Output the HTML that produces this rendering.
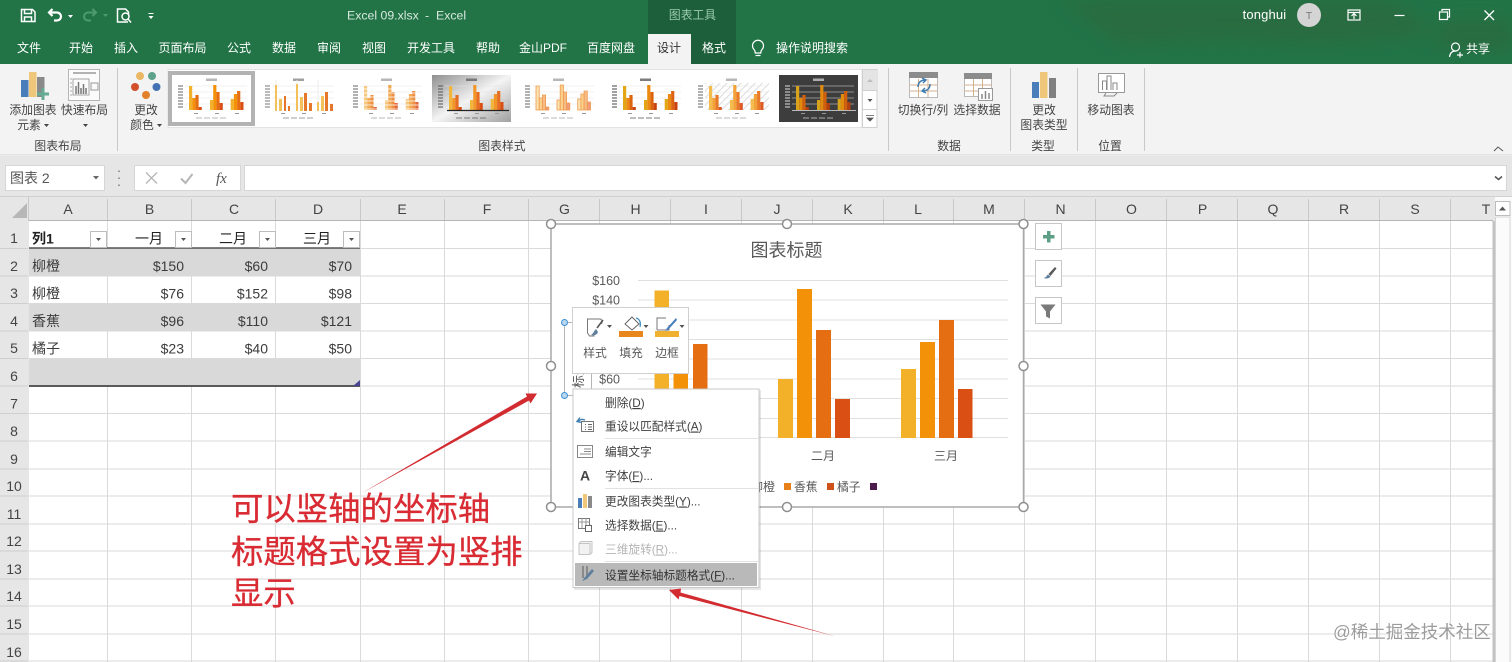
<!DOCTYPE html>
<html><head><meta charset="utf-8"><style>
html,body{margin:0;padding:0;background:#fff;width:1512px;height:662px;overflow:hidden}
svg{display:block;font-family:"Liberation Sans","Noto Sans CJK SC",sans-serif;font-size:12px;filter:blur(.35px)}
.m{text-anchor:middle}.e{text-anchor:end}
.t text{fill:#fff}
.h text{fill:#444;font-size:14px;text-anchor:middle}
.c text{fill:#3c3c3c;font-size:14px}
.y text{fill:#595959;font-size:12.5px;text-anchor:end}
.n text{fill:#404040;font-size:11.7px}
.f{fill:#fff;stroke:#bdbdbd}
</style></head><body>
<svg width="1512" height="662" viewBox="0 0 1512 662" xmlns="http://www.w3.org/2000/svg">
<defs>
<filter id="bl"><feGaussianBlur stdDeviation="9"/></filter>
<linearGradient id="gg" x1="0" y1="0" x2="1" y2="1"><stop offset="0" stop-color="#8f8f8f"/><stop offset=".5" stop-color="#f4f4f4"/><stop offset="1" stop-color="#a0a0a0"/></linearGradient>
<pattern id="ht" width="5" height="5" patternUnits="userSpaceOnUse" patternTransform="rotate(45)"><rect width="5" height="5" fill="#fff"/><rect width="1" height="5" fill="#dcdcdc"/></pattern>
<g id="bars">
<path d="M17 11h3.200v24H17zM38 25h3.200v10H38zM58.700 24h3.200v11h-3.200z" fill="var(--a)"/>
<path d="M20.200 23h3.200v12h-3.200zM41.200 10h3.200v25h-3.200zM61.900 19h3.200v16h-3.200z" fill="var(--b)"/>
<path d="M23.400 20h3.200v15h-3.200zM44.400 17h3.200v18h-3.200zM65.100 16h3.200v19h-3.200z" fill="var(--c)"/>
<path d="M26.600 32h3.200v3h-3.200zM47.600 28h3.200v7h-3.200zM68.300 27h3.200v8h-3.200z" fill="var(--d)"/>
</g>
<g id="ax">
<path d="M6 11h5M6 14h5M6 17h5M6 20h5M6 23h5M6 26h5M6 29h5M6 32h5" stroke="var(--l,#666)"/>
<path d="M13 11h62M13 17h62M13 23h62M13 29h62" stroke="#e2e2e2" stroke-width=".6"/>
<rect x="34" y="3.500" width="11" height="2.500" fill="var(--l,#999)" opacity=".7"/>
<path d="M22 38.500h4M43 38.500h4M63 38.500h4" stroke="#999"/>
<path d="M24 43h6M32 43h6M40 43h6M48 43h6" stroke="var(--l,#999)" opacity=".7"/>
</g>
</defs>

<!-- title bar -->
<rect width="1512" height="64" fill="#227447"/>
<g filter="url(#bl)" fill="#2a6a41" opacity=".85"><path d="M1060 0h330l50 34-120 10-90-5-110 5z"/><path d="M1440 20h72v30h-72z"/></g>
<rect x="648" width="88" height="64" fill="#1c5f3a"/>
<rect x="648" y="34" width="43" height="31" fill="#f3f3f3"/>
<!-- QAT -->
<g fill="none" stroke="#fff" stroke-width="1.500">
<path d="M21.500 9.500h11l2.500 2.500v9.500h-13.500z"/><path d="M24.500 9.500v4h7v-4M24.500 21.500v-4.500h7v4.500"/>
<path d="M49 12.500h8a4 4 0 0 1 0 8h-3M52.500 9l-3.500 3.500 3.500 3.500" stroke-width="2.200"/>
<g stroke="#4d9a6e"><path d="M96 12.500h-8a4 4 0 0 0 0 8h3M92.500 9l3.500 3.500-3.500 3.500" stroke-width="2"/></g>
<path d="M128 22h-10.500V9h8l3 3v3"/><circle cx="125.500" cy="16.500" r="3.500"/><path d="M128 19l3 3.500"/>
</g>
<path d="M68 15h5l-2.500 3zM148.500 16h5l-2.500 3zM148.500 13h5v1h-5z" fill="#fff"/>
<path d="M103 14h5l-2.500 3z" fill="#4d9a6e"/>
<g class="t">
<g font-size="12.300" style="fill:#d8e8de"><text x="347" y="19.500" style="fill:#d8e8de">Excel 09.xlsx</text><text x="425" y="19.500" style="fill:#d8e8de">-</text><text x="436" y="19.500" style="fill:#d8e8de">Excel</text></g>
<text x="692.500" y="19" class="m" style="fill:#9bcbaa" font-size="11.800">图表工具</text>
<g font-size="12">
<text x="29" y="52" class="m">文件</text><text x="81" y="52" class="m">开始</text><text x="126" y="52" class="m">插入</text><text x="182.500" y="52" class="m">页面布局</text><text x="239" y="52" class="m">公式</text><text x="284" y="52" class="m">数据</text><text x="329" y="52" class="m">审阅</text><text x="374" y="52" class="m">视图</text><text x="431" y="52" class="m">开发工具</text><text x="488" y="52" class="m">帮助</text><text x="543" y="52" class="m">金山PDF</text><text x="611" y="52" class="m">百度网盘</text>
<text x="669" y="52" class="m" style="fill:#333">设计</text><text x="714" y="52" class="m">格式</text><text x="812" y="52" class="m">操作说明搜索</text><text x="1478" y="53" class="m">共享</text>
</g>
<text x="1264.500" y="19" class="m" font-size="13" letter-spacing=".15">tonghui</text>
</g>
<g fill="none" stroke="#fff" stroke-width="1.200">
<path d="M754 49.500a5.500 5.500 0 1 1 8 0c-1 1-1.200 2-1.200 3.500h-5.600c0-1.500-.2-2.500-1.200-3.500zM755.500 55.500h5"/>
<rect x="1348" y="10" width="12" height="10"/><path d="M1348 12.500h12M1354 19v-5M1351.500 16l2.500-2.500 2.500 2.500"/>
<path d="M1394.500 15.500h10"/>
<rect x="1439.500" y="12" width="8" height="7.500"/><path d="M1442 11v-1.500h7.500v7.500h-2"/>
<path d="M1484.500 10.500l9.500 9.500M1494 10.500l-9.500 9.500" stroke-width="1.300"/>
<circle cx="1455.500" cy="47" r="4"/><path d="M1449.500 57c.5-4 2.500-6 6-6M1457 55h6M1460 52v5.500"/>
</g>
<circle cx="1309" cy="15" r="12" fill="#d4d4d4"/><text x="1309" y="19" class="m" font-size="10.500" fill="#777">T</text>

<!-- ribbon -->
<rect y="64" width="1512" height="91" fill="#f3f3f3"/>
<path d="M117.500 68v83M888.500 68v83M1010.500 68v83M1077.500 68v83M1144.500 68v83" stroke="#c9c9c9"/>
<path d="M0 155h1512" stroke="#d5d5d5"/>
<rect y="156" width="1512" height="41" fill="#e6e6e6"/>
<!-- ribbon left icons -->
<rect x="21" y="80" width="7.500" height="17" fill="#4a7ebb"/><rect x="29" y="72" width="7.500" height="25" fill="#efc77b"/><rect x="37" y="77" width="7.500" height="20" fill="#8a8a8a"/>
<path d="M41.500 88h3v4.500h4.500v3h-4.500v4.500h-3v-4.500h-4.500v-3h4.500z" fill="#66ab93"/>
<rect x="68.500" y="69.500" width="31" height="31" fill="#fbfbfb" stroke="#b5b5b5"/>
<path d="M73 73h23" stroke="#999" stroke-width="1.500"/><rect x="73" y="79" width="16" height="16" fill="none" stroke="#a5a5a5"/><path d="M76 94v-8M78.500 94v-12M81 94v-6M83.500 94v-10M86 94v-6" stroke="#777" stroke-width="1.500"/><rect x="91" y="83" width="7" height="7" fill="none" stroke="#999"/><path d="M71 78v18" stroke="#aaa" stroke-dasharray="2 2"/>
<circle cx="140" cy="76" r="4" fill="#eab865"/><circle cx="152" cy="76" r="4" fill="#5fa28b"/><circle cx="135" cy="87" r="4" fill="#d2502c"/><circle cx="156.500" cy="87" r="4" fill="#4272b4"/><circle cx="146" cy="95" r="4" fill="#e3812b"/>
<g fill="#444" font-size="11.800">
<text x="33" y="114" class="m">添加图表</text><text x="29" y="129" class="m">元素</text><path d="M44 124h5l-2.500 3zM83 124h5l-2.500 3zM157 124h5l-2.500 3z"/>
<text x="84.500" y="114" class="m">快速布局</text>
<text x="146" y="114" class="m">更改</text><text x="142" y="129" class="m">颜色</text>
<text x="58" y="150" class="m">图表布局</text><text x="502" y="150" class="m">图表样式</text>
<text x="923" y="114" class="m">切换行/列</text><text x="977" y="114" class="m">选择数据</text><text x="949" y="150" class="m">数据</text>
<text x="1044" y="114" class="m">更改</text><text x="1044" y="129" class="m">图表类型</text><text x="1043" y="150" class="m">类型</text>
<text x="1111" y="114" class="m">移动图表</text><text x="1110" y="150" class="m">位置</text>
</g>
<!-- gallery -->
<rect x="168" y="69.500" width="694" height="58" fill="#fff" stroke="#e3e3e3"/>
<rect x="168" y="71" width="87" height="55" fill="#b3b3b3"/>
<rect x="172" y="75" width="79" height="47" fill="#fff"/>
<g style="--a:#f2b12c;--b:#f39209;--c:#e66e12;--d:#d94f14"><g transform="translate(172 75)"><use href="#ax"/><use href="#bars"/></g></g>
<g transform="translate(259 75)"><rect width="79" height="47" fill="#fff"/><use href="#ax" style="--l:#777"/><path d="M17 5v31M38 5v31M59 5v31" stroke="#eee"/><path d="M16 10h2v26h-2zM20 24h3v12h-3zM37 9h2v27h-2zM41 22h3v14h-3zM58 27h2v9h-2zM62 21h3v15h-3z" fill="#f3c05a"/><path d="M25 21h2v15h-2zM29 31h2v5h-2zM45 18h3v18h-3zM50 28h3v8h-3zM66 17h3v19h-3zM71 29h3v7h-3z" fill="#e4772a"/></g>
<g transform="translate(347 75)" style="--a:#f5c982;--b:#f3aa52;--c:#ee9044;--d:#e2683a"><rect width="78" height="47" fill="#fff"/><use href="#ax"/><use href="#bars"/><path d="M16 14h60M16 18h60M16 22h60M16 26h60M16 30h60M16 34h60" stroke="#fff" stroke-width=".8"/></g>
<g transform="translate(432 75)" style="--a:#f2b63c;--b:#f3962a;--c:#e66e22;--d:#d94f14;--l:#555"><rect width="79" height="47" fill="url(#gg)"/><use href="#ax"/><use href="#bars"/><path d="M15 35.500h62" stroke="#222" stroke-width="1.200"/></g>
<g transform="translate(519 75)" style="--a:#fbe3b0;--b:#fad08c;--c:#f6bc85;--d:#f19a7c"><rect width="79" height="47" fill="#fff"/><use href="#ax"/><g stroke="#ef9a4d" stroke-width=".8"><use href="#bars"/></g></g>
<g transform="translate(606 75)" style="--a:#e4a514;--b:#ea8a10;--c:#dd640f;--d:#c8430f;--l:#444"><rect width="78" height="47" fill="#fff"/><use href="#ax"/><use href="#bars"/></g>
<g transform="translate(692 75)" style="--a:#f3bc4c;--b:#f3a23a;--c:#e87b2a;--d:#dd5a24"><rect width="79" height="47" fill="#fff"/><rect x="13" y="8" width="64" height="27" fill="url(#ht)"/><use href="#ax"/><use href="#bars"/></g>
<g transform="translate(779 75)" style="--a:#d8a21a;--b:#e08a0e;--c:#d0600e;--d:#b6400c;--l:#ddd"><rect width="79" height="47" fill="#3d3d3d"/><use href="#ax"/><use href="#bars"/><path d="M13 35.500h64" stroke="#bbb"/></g>
<rect x="862.500" y="69.500" width="14.500" height="58" fill="#fff" stroke="#d0d0d0"/><rect x="863" y="70" width="14" height="20" fill="#e4e4e4"/><path d="M863 90.500h14M863 109.500h14" stroke="#d0d0d0"/>
<path d="M867 82l3-3 3 3z" fill="#bbb"/><path d="M867.500 99h5l-2.500 3z" fill="#555"/><path d="M866 115.500h8M867 118h6l-3 3z" stroke="#555" fill="#555" stroke-width=".8"/>
<!-- data icons -->
<g fill="none" stroke="#b9b9b9">
<rect x="909.500" y="72.500" width="28" height="25" fill="#fff"/><path d="M909.500 85h28M909.500 91h28M918.500 79v18M928 79v18" stroke="#d3b08f"/>
<rect x="964.500" y="73.500" width="27" height="23" fill="#fff"/><path d="M964.500 85h27M964.500 91h27M973.500 79v18M982.500 79v18" stroke="#d3b08f"/>
</g>
<rect x="909" y="72" width="29" height="6" fill="#8c8c8c"/><rect x="964" y="73" width="28" height="6" fill="#8c8c8c"/>
<path d="M918 87c0-5 3-7 8-7M922 78l4 2-3 3M930 84c0 5-3 7-8 7M926 93l-4-2 3-3" fill="none" stroke="#3f7cb0" stroke-width="1.500"/>
<rect x="978.500" y="88.500" width="14" height="12" fill="#fff" stroke="#999"/><path d="M982 99v-5M985.500 99v-8M989 99v-6" stroke="#888" stroke-width="1.500"/>
<rect x="1032" y="82" width="7" height="16" fill="#4a7ebb"/><rect x="1040" y="72" width="7.500" height="26" fill="#efc77b"/><rect x="1049" y="78" width="7" height="20" fill="#808080"/>
<rect x="1098.500" y="73.500" width="26" height="19" fill="#fff" stroke="#999"/><path d="M1102.500 90v-9h4v9M1107 90v-14h4v14M1113 90v-7h4v7M1106 93l-2 3h10l3-3" fill="none" stroke="#888"/>
<path d="M1494 151l4-4 5 4" fill="none" stroke="#555"/>

<!-- formula bar -->
<rect x="5.500" y="165.500" width="99" height="25" fill="#fff" stroke="#d6d6d6"/>
<text x="10" y="183" font-size="14" fill="#555">图表 2</text><path d="M93 176h6l-3 3.500z" fill="#666"/>
<path d="M119 170.500v1.500M119 177.500v1.500M119 184.500v1.500" stroke="#999" stroke-width="2"/>
<rect x="134.500" y="165.500" width="106" height="25" fill="#fff" stroke="#d6d6d6"/>
<path d="M146 172.500l11 11M157 172.500l-11 11" stroke="#b5b5b5" stroke-width="1.300"/><path d="M181 178.500l4.500 4.500 7-9" fill="none" stroke="#b5b5b5" stroke-width="2"/>
<text x="216" y="183" font-family="Liberation Serif" font-style="italic" font-size="15" fill="#555">fx</text>
<rect x="244.500" y="165.500" width="1262" height="25" fill="#fff" stroke="#d6d6d6"/>
<path d="M1495 176.500l3.500 3 3.500-3" fill="none" stroke="#555" stroke-width="1.500"/>

<!-- col header -->
<rect y="197" width="1512" height="24" fill="#e6e6e6"/>
<path d="M0 196.500h1512" stroke="#d0d0d0"/>
<path d="M12 218l15-15v15z" fill="#b7b7b7"/>
<path d="M28.500 197v464M107.500 199v22M191.500 199v22M275.500 199v22M360.500 199v22M444.500 199v22M528.500 199v22M599.500 199v22M670.500 199v22M741.500 199v22M812.500 199v22M883.500 199v22M953.500 199v22M1024.500 199v22M1095.500 199v22M1166.500 199v22M1237.500 199v22M1308.500 199v22M1379.500 199v22M1450.500 199v22" stroke="#c8c8c8"/>
<g class="h">
<text x="68" y="214">A</text><text x="149.500" y="214">B</text><text x="234" y="214">C</text><text x="318" y="214">D</text><text x="402" y="214">E</text><text x="487" y="214">F</text><text x="564.500" y="214">G</text><text x="635.500" y="214">H</text><text x="706" y="214">I</text><text x="777" y="214">J</text><text x="848" y="214">K</text><text x="918" y="214">L</text><text x="989" y="214">M</text><text x="1060.500" y="214">N</text><text x="1131.500" y="214">O</text><text x="1202.500" y="214">P</text><text x="1273" y="214">Q</text><text x="1344" y="214">R</text><text x="1415" y="214">S</text><text x="1486" y="214">T</text>
</g>
<!-- row header -->
<rect y="221" width="29" height="441" fill="#e6e6e6"/>
<path d="M0 248.500h28M0 276h28M0 303.500h28M0 331h28M0 358.500h28M0 386h28M0 413.500h28M0 441h28M0 469h28M0 496h28M0 524h28M0 551h28M0 579h28M0 606h28M0 634h28M0 661h28" stroke="#cfcfcf"/>
<g class="h">
<text x="14" y="243">1</text><text x="14" y="271">2</text><text x="14" y="298">3</text><text x="14" y="326">4</text><text x="14" y="353">5</text><text x="14" y="381">6</text><text x="14" y="408.500">7</text><text x="14" y="436">8</text><text x="14" y="464">9</text><text x="14" y="491">10</text><text x="14" y="519">11</text><text x="14" y="546">12</text><text x="14" y="574">13</text><text x="14" y="601">14</text><text x="14" y="629">15</text><text x="14" y="657">16</text>
</g>
<!-- grid -->
<rect x="29" y="221" width="1464" height="441" fill="#fff"/>
<path d="M29 248.500H1493M29 276H1493M29 303.500H1493M29 331H1493M29 358.500H1493M29 386H1493M29 413.500H1493M29 441H1493M29 469H1493M29 496H1493M29 524H1493M29 551H1493M29 579H1493M29 606H1493M29 634H1493M29 661H1493M107.500 221V662M191.500 221V662M275.500 221V662M360.500 221V662M444.500 221V662M528.500 221V662M599.500 221V662M670.500 221V662M741.500 221V662M812.500 221V662M883.500 221V662M953.500 221V662M1024.500 221V662M1095.500 221V662M1166.500 221V662M1237.500 221V662M1308.500 221V662M1379.500 221V662M1450.500 221V662" stroke="#dadada" fill="none"/>
<path d="M29 220.500h1464" stroke="#b5b5b5"/>
<rect x="1492.500" y="221" width="2.500" height="441" fill="#c2c2c2"/>
<rect x="1495" y="197" width="17" height="465" fill="#fbfbfb"/>
<rect x="1495.500" y="201.500" width="14.500" height="14" fill="#fff" stroke="#bdbdbd"/><path d="M1499 210.500l3.500-4 3.500 4z" fill="#555"/>
<path d="M1495.500 217h14.500v445M1495.500 217v445" fill="none" stroke="#d4d4d4"/>
<!-- table -->
<rect x="29" y="249" width="331" height="27" fill="#d9d9d9"/><rect x="29" y="304" width="331" height="27" fill="#d9d9d9"/><rect x="29" y="359" width="331" height="27" fill="#d9d9d9"/>
<path d="M29 248h331" stroke="#333" stroke-width="1.300"/><path d="M29 386h331" stroke="#5a5a5a" stroke-width="2"/>
<path d="M353 386l7-6v6z" fill="#4a4590"/>
<g>
<rect class="f" x="90.500" y="231.500" width="16" height="16"/><rect class="f" x="175.500" y="231.500" width="16" height="16"/><rect class="f" x="259.500" y="231.500" width="16" height="16"/><rect class="f" x="343.500" y="231.500" width="16" height="16"/>
<path d="M96 238h5l-2.500 3zM181 238h5l-2.500 3zM265 238h5l-2.500 3zM349 238h5l-2.500 3z" fill="#555"/>
</g>
<g class="c">
<text x="32" y="243.500" font-weight="bold" style="fill:#222">列1</text><text x="163" y="243.500" class="e" style="fill:#222">一月</text><text x="247" y="243.500" class="e" style="fill:#222">二月</text><text x="331" y="243.500" class="e" style="fill:#222">三月</text>
<text x="32" y="271">柳橙</text><text x="184" y="271" class="e">$150</text><text x="268" y="271" class="e">$60</text><text x="352" y="271" class="e">$70</text>
<text x="32" y="298.500">柳橙</text><text x="184" y="298.500" class="e">$76</text><text x="268" y="298.500" class="e">$152</text><text x="352" y="298.500" class="e">$98</text>
<text x="32" y="326">香蕉</text><text x="184" y="326" class="e">$96</text><text x="268" y="326" class="e">$110</text><text x="352" y="326" class="e">$121</text>
<text x="32" y="353.500">橘子</text><text x="184" y="353.500" class="e">$23</text><text x="268" y="353.500" class="e">$40</text><text x="352" y="353.500" class="e">$50</text>
</g>

<!-- chart -->
<rect x="551" y="224" width="472.500" height="283" fill="#fff" stroke="#a8a8a8" stroke-width="1.500"/>
<text x="786.500" y="256.500" class="m" font-size="18" fill="#595959">图表标题</text>
<path d="M638 280.500h370M638 300h370M638 320h370M638 339.500h370M638 359h370M638 379h370M638 398.500h370M638 418.500h370M638 437.500h370" stroke="#e0e0e0"/>
<g class="y"><text x="620" y="285">$160</text><text x="620" y="304.500">$140</text><text x="620" y="383.500">$60</text></g>
<path d="M654.500 290.500h14.500V438h-14.500zM778 379h15v59h-15zM901 369h15v69h-15z" fill="#f3b12a"/>
<path d="M673.500 360h14.500v78h-14.500zM797 289h15v149h-15zM920 342h15v96h-15z" fill="#f39209"/>
<path d="M693 344h14.500v94H693zM816 330h15v108h-15zM939 320h15v118h-15z" fill="#e66e12"/>
<path d="M835 399h15v39h-15zM958 389h14.500v49H958z" fill="#d94f14"/>
<text x="823" y="460" class="m" fill="#595959" font-size="12">二月</text><text x="946" y="460" class="m" fill="#595959" font-size="12">三月</text>
<text x="775" y="491" class="e" fill="#595959" font-size="12">柳橙</text>
<rect x="784" y="483" width="7" height="7" fill="#e8801a"/><text x="794" y="491" fill="#595959" font-size="11.800">香蕉</text>
<rect x="827" y="483" width="7" height="7" fill="#d0501a"/><text x="837" y="491" fill="#595959" font-size="11.800">橘子</text>
<rect x="870" y="483" width="7" height="7" fill="#4a1d4d"/>
<!-- axis title selection -->
<rect x="564.500" y="322.500" width="27" height="73" fill="#fff" stroke="#b5b5b5"/>
<text transform="translate(583 388) rotate(-90)" font-size="13" fill="#595959">标题</text>
<circle cx="564.500" cy="322.500" r="3" fill="#b8d8f0" stroke="#3f8fd0"/><circle cx="564.500" cy="395.500" r="3" fill="#b8d8f0" stroke="#3f8fd0"/>
<!-- handles -->
<g fill="#fff" stroke="#8f8f8f" stroke-width="1.500">
<circle cx="551" cy="224" r="4.500"/><circle cx="787" cy="224" r="4.500"/><circle cx="1023.500" cy="224" r="4.500"/><circle cx="551" cy="366" r="4.500"/><circle cx="1023.500" cy="366" r="4.500"/><circle cx="551" cy="507" r="4.500"/><circle cx="787" cy="507" r="4.500"/><circle cx="1023.500" cy="507" r="4.500"/>
</g>
<!-- side buttons -->
<g fill="#fff" stroke="#c6c6c6"><rect x="1035.500" y="223.500" width="26" height="26"/><rect x="1035.500" y="260.500" width="26" height="26"/><rect x="1035.500" y="297.500" width="26" height="26"/></g>
<path d="M1047 231h3.500v4h4v3.500h-4v4H1047v-4h-4V235h4z" fill="#5c9f86"/>
<path d="M1055 267l-6.500 7 2 2 6-7.500z" fill="#595959"/><path d="M1048 274.500c-1.500 1-1.500 3-4.500 3.500 2.500 1 6 .5 7-1.500z" fill="#5f7f9d"/>
<path d="M1040.500 304.500h15l-5.500 7v7l-4-2v-5z" fill="#7a7a7a"/>

<!-- mini toolbar -->
<rect x="572.500" y="307.500" width="116" height="66" fill="#fff" stroke="#d0d0d0"/>
<g fill="none"><path d="M587.500 333v-14h13l2 2-1 3M587.500 333l2 3h5" stroke="#777"/><path d="M603 320l-6 8" stroke="#555" stroke-width="1.600"/><path d="M596 329c-2 2-3 5-5 6 3 1 6 0 7-3z" fill="#5f7f9d"/>
<path d="M632 317l7 7-7 6-7-6z" stroke="#666"/><path d="M636 318c4 1 5 5 4 9" stroke="#3f8fc0" stroke-width="1.300"/>
<path d="M657 330v-12h9M657 330h12v-5" stroke="#777"/><path d="M676 318l-9 10-2 3 3-1 9-10z" fill="#4a7ebb"/></g>
<rect x="619" y="331" width="24" height="6" fill="#e8851b"/><rect x="655" y="331" width="24" height="6" fill="#f0b030"/>
<path d="M607 325h5l-2.500 3zM643.500 325h5l-2.500 3zM679.500 325h5l-2.500 3z" fill="#555"/>
<g fill="#595959" font-size="11.800"><text x="595" y="357" class="m">样式</text><text x="631" y="357" class="m">填充</text><text x="667" y="357" class="m">边框</text></g>

<!-- context menu -->
<rect x="574" y="390" width="187" height="200" fill="#000" opacity=".1"/>
<rect x="573" y="389" width="186" height="198.500" fill="#fff" stroke="#c8c8c8"/>
<path d="M605 438.500h153M605 488.500h153M605 561.500h153" stroke="#e2e2e2"/>
<rect x="575" y="563" width="182" height="23" fill="#b9b9b9"/>
<g class="n">
<text x="605" y="407">删除(<tspan text-decoration="underline">D</tspan>)</text>
<text x="605" y="430.500">重设以匹配样式(<tspan text-decoration="underline">A</tspan>)</text>
<text x="605" y="456">编辑文字</text>
<text x="605" y="480">字体(<tspan text-decoration="underline">F</tspan>)...</text>
<text x="605" y="505.500">更改图表类型(<tspan text-decoration="underline">Y</tspan>)...</text>
<text x="605" y="529.500">选择数据(<tspan text-decoration="underline">E</tspan>)...</text>
<text x="605" y="553.500" style="fill:#b4b4b4">三维旋转(<tspan text-decoration="underline">R</tspan>)...</text>
<text x="605" y="579.500" style="fill:#333">设置坐标轴标题格式(<tspan text-decoration="underline">F</tspan>)...</text>
</g>
<!-- menu icons -->
<g fill="none" stroke="#666">
<rect x="581.500" y="421.500" width="12" height="10" stroke="#777"/><path d="M585 424.500h1M588 424.500h4M585 427h1M588 427h4M585 429.500h1M588 429.500h4"/>
<path d="M578 422c2-3 4-3 7-2M580 417.500l-3 4 5 1" stroke="#3f7cb0" stroke-width="1.400"/>
<rect x="577.500" y="445.500" width="15" height="12" stroke="#888"/><path d="M584 449h7M584 451.500h7M580 454h11" stroke="#888"/>
<rect x="578.500" y="518.500" width="11" height="10" stroke="#777"/><path d="M578.500 522h11M582 518.500v10M586 518.500v10" stroke="#999"/>
<rect x="585.500" y="525.500" width="6" height="6" fill="#fff" stroke="#666"/>
<path d="M579 543.500l2-2h11v11l-2 2h-11zM590 543.500h-11M590 543.500v11" stroke="#c5c5c5" fill="#f2f2f2"/>
</g>
<text x="585" y="480.500" class="m" font-weight="bold" font-size="14" fill="#444">A</text>
<rect x="578" y="498" width="4" height="10" fill="#4a7ebb"/><rect x="583" y="494" width="4" height="14" fill="#efc77b"/><rect x="588" y="496" width="4" height="12" fill="#8a8a8a"/>
<path d="M583 566v12M587 566v12" stroke="#8a8a8a" stroke-width="2"/><path d="M592 569l-7 8-3 4 5-2 7-8z" fill="#5f7f9d"/>

<!-- annotation -->
<g fill="#d92b33" stroke="#d92b33" stroke-width=".3" font-size="32.400">
<text x="231" y="520">可以竖轴的坐标轴</text>
<text x="231" y="563">标题格式设置为竖排</text>
<text x="231" y="604.500">显示</text>
</g>
<path d="M362 493L527 396.500 525.500 393.500 537 393.500 530.500 403.500 529 400.500z" fill="#d22b30"/>
<path d="M669 590L681 588.500 680.500 592.500 836 636.500 679.500 596 678.500 599.500z" fill="#d22b30"/>
<!-- watermark -->
<text x="1333" y="638" font-size="17.500" fill="#9c9c9c" stroke="#fff" stroke-width="2" paint-order="stroke" stroke-opacity=".5">@稀土掘金技术社区</text>
</svg>
</body></html>
